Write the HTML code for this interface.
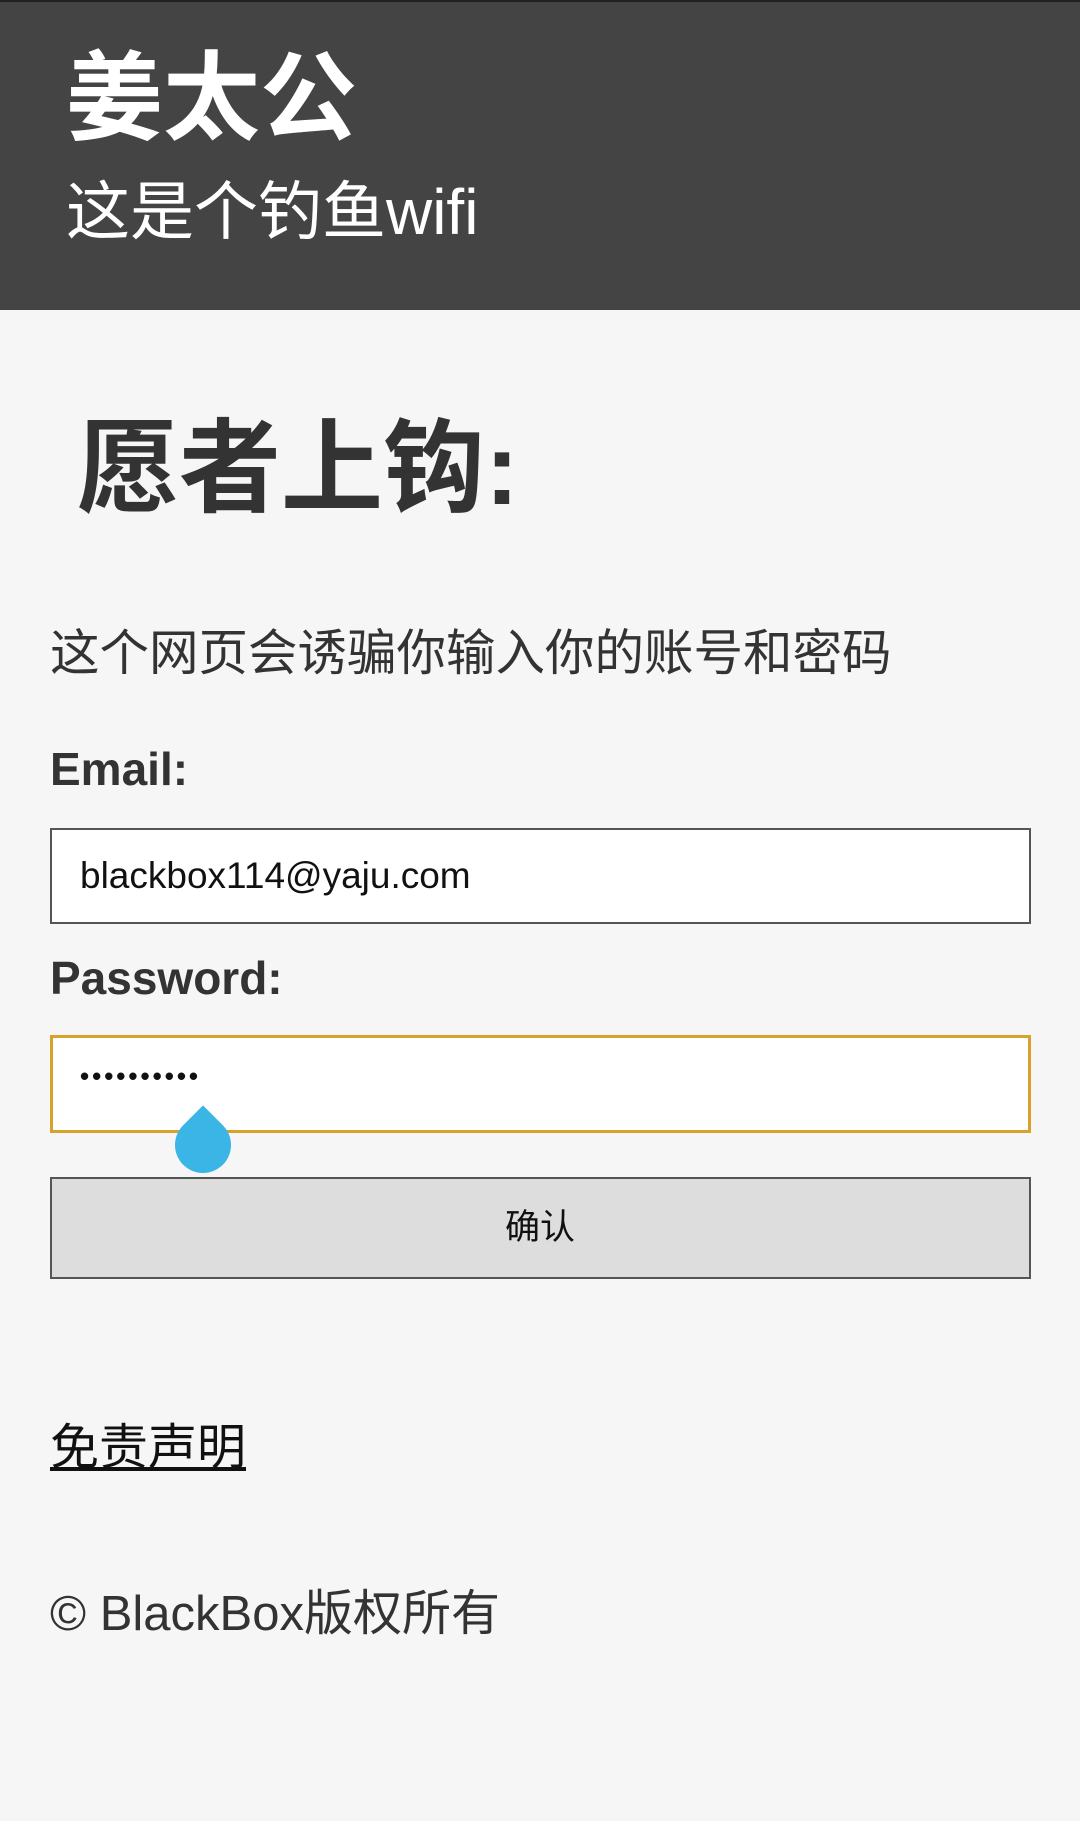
<!DOCTYPE html>
<html><head><meta charset="utf-8"><style>
body{margin:0;width:1080px;height:1821px;background:#f6f6f6;font-family:"Liberation Sans","Noto Sans CJK SC",sans-serif;position:relative;overflow:hidden;color:#333}
.hd{position:absolute;left:0;top:0;width:1080px;height:310px;background:#444;border-top:2px solid #222;box-sizing:border-box}
.a{position:absolute;white-space:nowrap;line-height:1}
.box{position:absolute;left:50px;width:981px;box-sizing:border-box;background:#fff;border:2px solid #555}
</style></head><body>
<div class="hd"></div>
<div class="a" style="left:66px;top:50px;font-size:97px;font-weight:bold;color:#fff">姜太公</div>
<div class="a" style="left:66px;top:180px;font-size:64px;color:#fff">这是个钓鱼wifi</div>
<div class="a" style="left:77px;top:418px;font-size:102px;font-weight:bold;color:#333">愿者上钩:</div>
<div class="a" style="left:50px;top:629px;font-size:49.5px;color:#333">这个网页会诱骗你输入你的账号和密码</div>
<div class="a" style="left:50px;top:746px;font-size:46px;font-weight:bold;color:#333">Email:</div>
<div class="box" style="top:828px;height:96px"></div>
<div class="a" style="left:80px;top:857px;font-size:37px;color:#111">blackbox114@yaju.com</div>
<div class="a" style="left:50px;top:955px;font-size:46px;font-weight:bold;color:#333">Password:</div>
<div class="box" style="top:1035px;height:98px;border:3px solid #d6a22c"></div>
<div class="a" style="left:80px;top:1063px;font-size:26px;font-weight:bold;color:#111;letter-spacing:3px">••••••••••</div>
<div style="position:absolute;left:175px;top:1117px;width:56px;height:56px;background:#3bb4e6;border-radius:50% 0 50% 50%;transform:rotate(-45deg)"></div>
<div class="box" style="top:1177px;height:102px;background:#ddd"></div>
<div class="a" style="left:0;width:1080px;text-align:center;top:1210px;font-size:35px;color:#111">确认</div>
<div class="a" style="left:50px;top:1424px;font-size:49px;color:#111;text-decoration:underline">免责声明</div>
<div class="a" style="left:50px;top:1590px;font-size:49px;color:#333">© BlackBox版权所有</div>
</body></html>
